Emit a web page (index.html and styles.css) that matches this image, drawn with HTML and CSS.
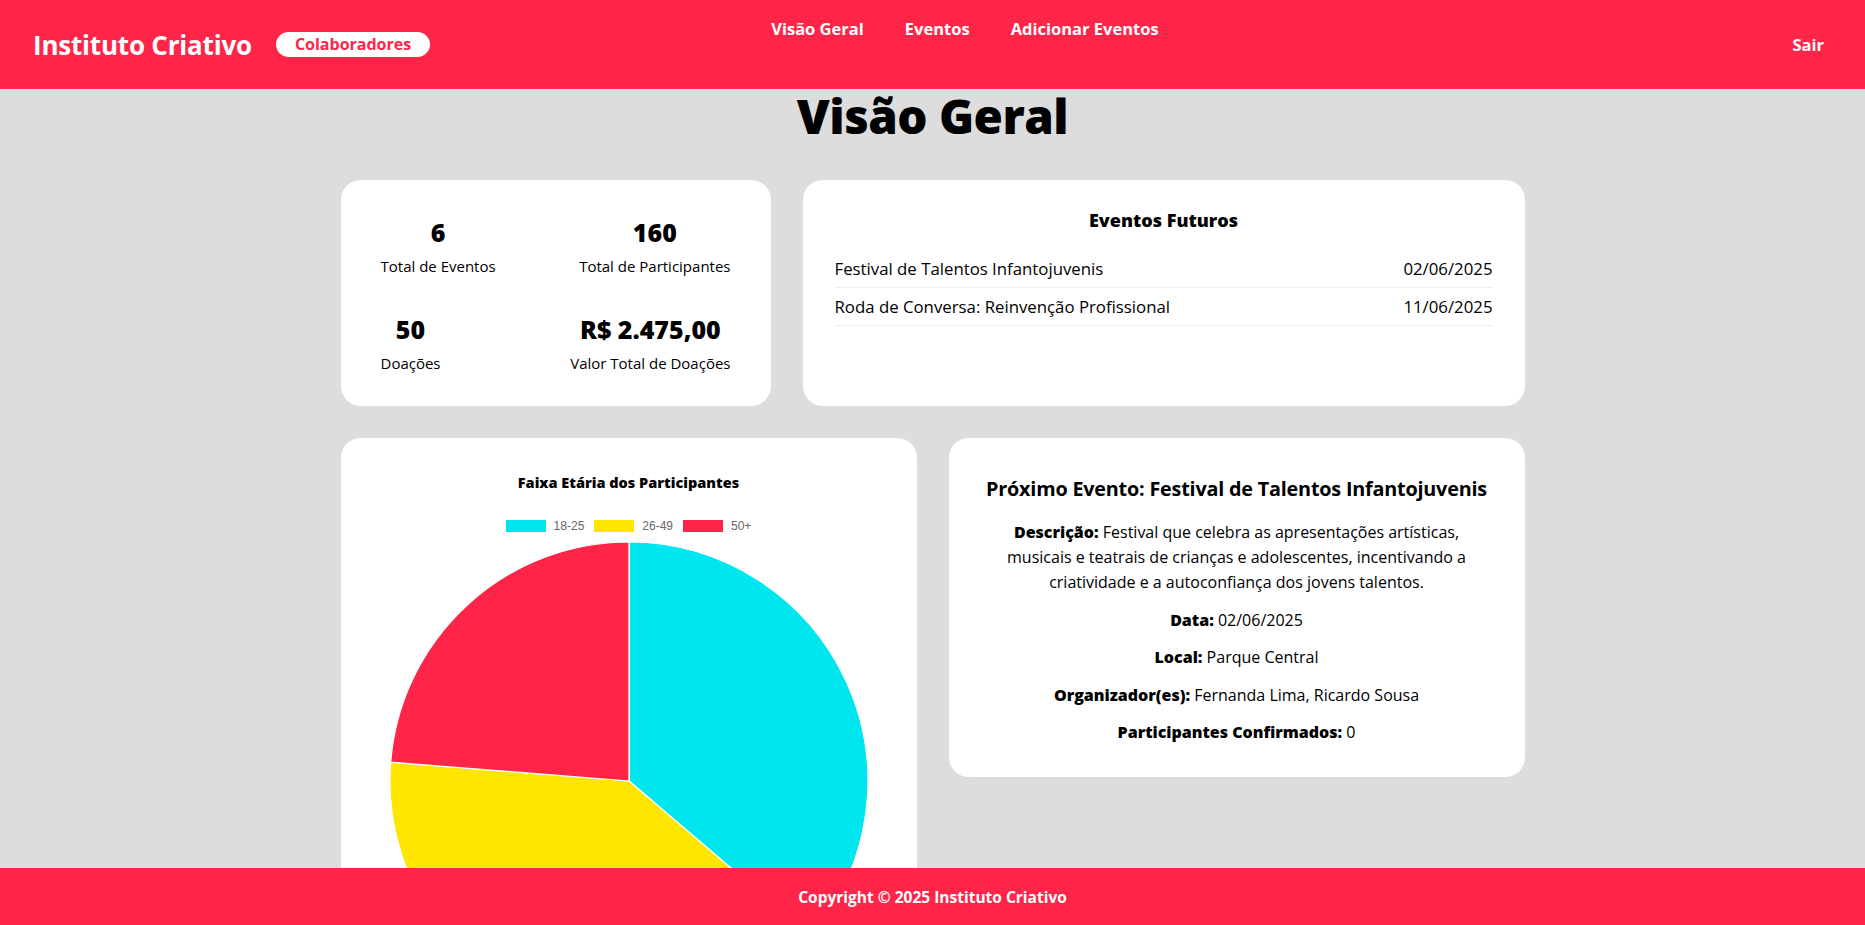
FILE: index.html
```html
<!DOCTYPE html>
<html lang="pt-BR">
<head>
<meta charset="utf-8">
<title>Visão Geral - Instituto Criativo</title>
<link rel="stylesheet" href="styles.css">
</head>
<body>
<header class="topbar">
  <div class="brand">
    <span class="brand-name">Instituto Criativo</span>
    <span class="brand-pill">Colaboradores</span>
  </div>
  <nav class="nav">
    <a class="nav-link" href="#">Visão Geral</a>
    <a class="nav-link" href="#">Eventos</a>
    <a class="nav-link" href="#">Adicionar Eventos</a>
  </nav>
  <a class="logout" href="#">Sair</a>
</header>

<main class="main">
  <h1 class="page-title">Visão Geral</h1>

  <section class="row row-top">
    <div class="card stats">
      <div class="stat">
        <div class="stat-num">6</div>
        <div class="stat-label">Total de Eventos</div>
      </div>
      <div class="stat">
        <div class="stat-num">160</div>
        <div class="stat-label">Total de Participantes</div>
      </div>
      <div class="stat">
        <div class="stat-num">50</div>
        <div class="stat-label">Doações</div>
      </div>
      <div class="stat">
        <div class="stat-num">R$ 2.475,00</div>
        <div class="stat-label">Valor Total de Doações</div>
      </div>
    </div>

    <div class="card upcoming">
      <h3 class="upcoming-title">Eventos Futuros</h3>
      <ul class="upcoming-list">
        <li class="upcoming-item"><span>Festival de Talentos Infantojuvenis</span><span>02/06/2025</span></li>
        <li class="upcoming-item"><span>Roda de Conversa: Reinvenção Profissional</span><span>11/06/2025</span></li>
      </ul>
    </div>
  </section>

  <section class="row row-bottom">
    <div class="card chart-card">
      <h4 class="chart-title">Faixa Etária dos Participantes</h4>
      <div class="legend">
        <span class="legend-item"><span class="swatch swatch-cyan"></span>18-25</span>
        <span class="legend-item"><span class="swatch swatch-yellow"></span>26-49</span>
        <span class="legend-item"><span class="swatch swatch-red"></span>50+</span>
      </div>
      <svg class="pie" width="480" height="480" viewBox="0 0 480 480">
        <path d="M240,240 L240,1 A239,239 0 0 1 421.7,395.2 Z" fill="#00e6ee" stroke="#fff" stroke-width="1.2"/>
        <path d="M240,240 L421.7,395.2 A239,239 0 0 1 1.7,221.2 Z" fill="#ffe600" stroke="#fff" stroke-width="1.2"/>
        <path d="M240,240 L1.7,221.2 A239,239 0 0 1 240,1 Z" fill="#fe2549" stroke="#fff" stroke-width="1.2"/>
      </svg>
    </div>

    <div class="card next-event">
      <h3 class="next-title">Próximo Evento: Festival de Talentos Infantojuvenis</h3>
      <p class="next-p"><strong>Descrição:</strong> Festival que celebra as apresentações artísticas, musicais e teatrais de crianças e adolescentes, incentivando a criatividade e a autoconfiança dos jovens talentos.</p>
      <p class="next-p"><strong>Data:</strong> 02/06/2025</p>
      <p class="next-p"><strong>Local:</strong> Parque Central</p>
      <p class="next-p"><strong>Organizador(es):</strong> Fernanda Lima, Ricardo Sousa</p>
      <p class="next-p"><strong>Participantes Confirmados:</strong> 0</p>
    </div>
  </section>
</main>

<footer class="footer">Copyright © 2025 Instituto Criativo</footer>
</body>
</html>
```

FILE: styles.css
```css
* { box-sizing: border-box; }

html, body {
  margin: 0;
  padding: 0;
}

body {
  background: #dddddd;
  font-family: "Open Sans", "Noto Sans", sans-serif;
  color: #000;
  padding-bottom: 80px;
}

.topbar {
  height: 89px;
  background: #fe2549;
  display: flex;
  align-items: center;
  padding: 0 41px 0 33px;
  color: #fff;
}

.brand {
  display: flex;
  align-items: center;
  gap: 24px;
}

.brand-name {
  font-size: 26px;
  font-weight: 700;
  letter-spacing: -0.2px;
}

.brand-pill {
  background: #fff;
  color: #fe2549;
  font-size: 16px;
  font-weight: 700;
  height: 25px;
  line-height: 25px;
  padding: 0 19px;
  border-radius: 13px;
}

.nav {
  align-self: flex-start;
  display: flex;
  gap: 41px;
  margin-left: 341px;
  padding-top: 17px;
}

.nav-link {
  color: #fff;
  text-decoration: none;
  font-size: 16.5px;
  font-weight: 700;
  line-height: 24px;
}

.logout {
  margin-left: auto;
  color: #fff;
  text-decoration: none;
  font-size: 16.5px;
  font-weight: 700;
}

.main {
  width: 1184px;
  margin: 0 auto;
}

.page-title {
  margin: 0;
  text-align: center;
  font-size: 47.5px;
  font-weight: 800;
  line-height: 54px;
  letter-spacing: -0.5px;
  padding-bottom: 37px;
}

.row {
  display: grid;
  gap: 32px;
  margin-bottom: 32px;
}

.row-top {
  grid-template-columns: 430px 1fr;
}

.row-bottom {
  grid-template-columns: 1fr 1fr;
  align-items: start;
}

.card {
  background: #fff;
  border-radius: 20px;
}

/* stats */
.stats {
  display: grid;
  grid-template-columns: auto auto;
  justify-content: space-between;
  row-gap: 40px;
  padding: 38px 40px 34px;
}

.stat {
  text-align: center;
}

.stat:nth-child(odd) {
  justify-self: start;
}

.stat:nth-child(even) {
  justify-self: end;
}

.stat-num {
  font-size: 25px;
  font-weight: 800;
  line-height: 29px;
  margin-bottom: 10px;
}

.stat-label {
  font-size: 15px;
  line-height: 18px;
}

/* upcoming */
.upcoming {
  padding: 30px 32px 32px;
}

.upcoming-title {
  margin: 0 0 20px;
  text-align: center;
  font-size: 18px;
  font-weight: 800;
  line-height: 20px;
}

.upcoming-list {
  list-style: none;
  margin: 0;
  padding: 0;
}

.upcoming-item {
  display: flex;
  justify-content: space-between;
  font-size: 16.8px;
  line-height: 21px;
  padding: 8px 0;
  border-bottom: 1px solid #eeeeee;
}

/* chart */
.chart-card {
  padding: 36px 0 40px;
  display: flex;
  flex-direction: column;
  align-items: center;
}

.chart-title {
  margin: 0;
  font-size: 14.5px;
  font-weight: 800;
  line-height: 18px;
}

.legend {
  display: flex;
  gap: 10px;
  margin-top: 27px;
  margin-bottom: 8px;
  font-family: "Liberation Sans", Arial, sans-serif;
  font-size: 12px;
  color: #666;
  line-height: 14px;
}

.legend-item {
  display: flex;
  align-items: center;
  gap: 8px;
}

.swatch {
  display: inline-block;
  width: 40px;
  height: 12px;
}

.swatch-cyan { background: #00e6ee; }
.swatch-yellow { background: #ffe600; }
.swatch-red { background: #fe2549; }

.pie {
  display: block;
}

/* next event */
.next-event {
  padding: 32px 30px 32px;
  text-align: center;
}

.next-title {
  margin: 7px 0 19px;
  font-size: 19.8px;
  font-weight: 700;
  line-height: 24px;
  letter-spacing: -0.2px;
  white-space: nowrap;
}

.next-p {
  margin: 0 0 12.5px;
  padding: 0 6px;
  font-size: 16px;
  line-height: 25px;
}

.next-p:last-child {
  margin-bottom: 0;
}

.next-p strong {
  font-weight: 800;
}

.footer {
  position: fixed;
  left: 0;
  right: 0;
  bottom: 0;
  height: 57px;
  background: #fe2549;
  color: #fff;
  display: flex;
  align-items: center;
  justify-content: center;
  font-size: 15.5px;
  font-weight: 700;
}
```
